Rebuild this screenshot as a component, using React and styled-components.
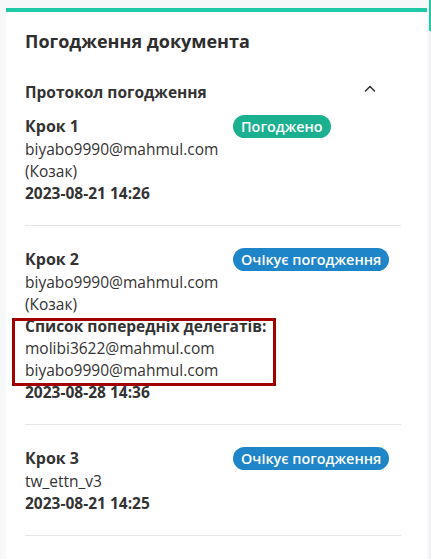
import React from "react";
import styled, { createGlobalStyle } from "styled-components";

const steps = [
  {
    title: "Крок 1",
    status: "done",
    lines: ["biyabo9990@mahmul.com", "(Козак)"],
    date: "2023-08-21 14:26",
  },
  {
    title: "Крок 2",
    status: "wait",
    lines: ["biyabo9990@mahmul.com", "(Козак)"],
    delegates: ["molibi3622@mahmul.com", "biyabo9990@mahmul.com"],
    date: "2023-08-28 14:36",
  },
  {
    title: "Крок 3",
    status: "wait",
    lines: ["tw_ettn_v3"],
    date: "2023-08-21 14:25",
  },
];

const statusText = {
  done: "Погоджено",
  wait: "Очікує погодження",
};

const App = () => {
  return (
    <>
      <Global />
      <Page>
        <Main>
          <Card>
            <Title>Погодження документа</Title>
            <SectionHead>
              <span>Протокол погодження</span>
              <Chevron width="24" height="24" viewBox="0 0 24 24">
                <path d="M7.5 14 L12 9.5 L16.5 14" />
              </Chevron>
            </SectionHead>
            {steps.map((s, i) => (
              <Step key={s.title} $first={i === 0}>
                <StepHead>
                  <StepTitle>{s.title}</StepTitle>
                  <Badge $status={s.status}>{statusText[s.status]}</Badge>
                </StepHead>
                {s.lines.map((l) => (
                  <Line key={l}>{l}</Line>
                ))}
                {s.delegates && (
                  <Delegates>
                    <Strong>Список попередніх делегатів:</Strong>
                    {s.delegates.map((d) => (
                      <Line key={d}>{d}</Line>
                    ))}
                  </Delegates>
                )}
                <Strong>{s.date}</Strong>
              </Step>
            ))}
          </Card>
        </Main>
        <Track>
          <Thumb />
        </Track>
      </Page>
    </>
  );
};

const Global = createGlobalStyle`
    html, body {
        margin: 0;
        padding: 0;
        background: #f7f8fa;
        font-family: "Open Sans", "Noto Sans", sans-serif;
        color: #333333;
    }
`;

const Page = styled.div`
    display: flex;
    height: 100vh;
    overflow: hidden;
`;

const Main = styled.div`
    flex: 1;
    padding: 8px 2px 0 6px;
`;

const Track = styled.div`
    width: 2px;
    background: #eff1f4;
`;

const Thumb = styled.div`
    height: 31px;
    background: #20c9a5;
`;

const Card = styled.div`
    background: #ffffff;
    border-top: 4px solid #20c9a5;
    padding: 16px 26px 0 19px;
    min-height: 100%;
    box-sizing: border-box;
`;

const Title = styled.h2`
    margin: 0;
    font-size: 18px;
    line-height: 26px;
    font-weight: 700;
    color: #2e2e2e;
`;

const SectionHead = styled.div`
    display: flex;
    align-items: center;
    justify-content: space-between;
    margin-top: 26px;
    padding-right: 19px;
    height: 24px;
    font-size: 15.5px;
    font-weight: 700;
`;

const Chevron = styled.svg`
    fill: none;
    stroke: #333333;
    stroke-width: 1.6;
    stroke-linecap: round;
    stroke-linejoin: round;
    margin-top: -6px;
`;

const Step = styled.div`
    padding: ${(p) => (p.$first ? "10px" : "21px")} 0 21px;
    border-bottom: 1px solid #e6e7e9;
    font-size: 15.5px;
    line-height: 22px;
`;

const StepHead = styled.div`
    display: grid;
    grid-template-columns: 1fr 168px;
    align-items: center;
    height: 24px;
`;

const StepTitle = styled.div`
    font-size: 16px;
    font-weight: 700;
`;

const Badge = styled.div`
    justify-self: start;
    height: 23px;
    line-height: 23px;
    padding: 0 8px;
    border-radius: 12px;
    font-size: 14.4px;
    font-weight: 600;
    color: #ffffff;
    background: ${(p) => (p.$status === "done" ? "#1bb08f" : "#1e86c8")};
`;

const Line = styled.div`
    white-space: nowrap;
`;

const Strong = styled.div`
    font-weight: 700;
    white-space: nowrap;
`;

const Delegates = styled.div`
    position: relative;

    &::after {
        content: "";
        position: absolute;
        top: 3px;
        left: -13px;
        width: 264px;
        height: 68px;
        box-sizing: border-box;
        border: 3px solid #a00000;
        pointer-events: none;
    }
`;

export default App;
